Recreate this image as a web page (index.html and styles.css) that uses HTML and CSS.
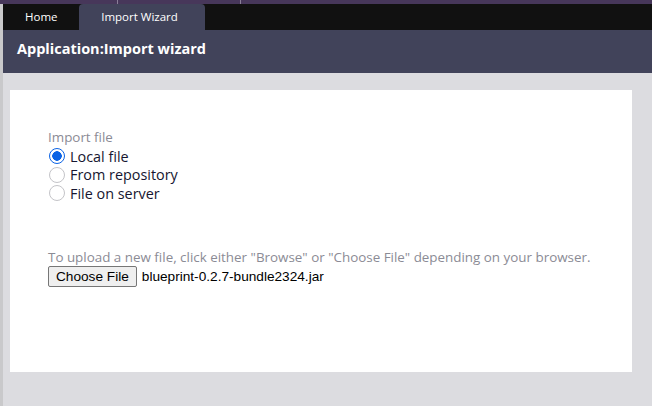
FILE: index.html
```html
<!DOCTYPE html>
<html lang="en">
<head>
    <meta charset="UTF-8">
    <title>Import Wizard</title>
    <link rel="stylesheet" href="styles.css">
</head>
<body>
    <div class="top-strip">
        <span class="sep sep-1"></span>
        <span class="sep sep-2"></span>
    </div>
    <div class="page">
        <div class="tab-bar">
            <a href="#" class="tab">Home</a>
            <a href="#" class="tab active">Import Wizard</a>
        </div>
        <div class="header">
            <h1>Application:Import wizard</h1>
        </div>
        <div class="content">
            <div class="panel">
                <div class="field-label">Import file</div>
                <div class="radio-group">
                    <label class="radio"><input type="radio" name="source" checked> Local file</label>
                    <label class="radio"><input type="radio" name="source"> From repository</label>
                    <label class="radio"><input type="radio" name="source"> File on server</label>
                </div>
                <div class="hint">To upload a new file, click either "Browse" or "Choose File" depending on your browser.</div>
                <div class="file-row">
                    <button class="file-button">Choose File</button>
                    <span class="file-name">blueprint-0.2.7-bundle2324.jar</span>
                </div>
            </div>
        </div>
    </div>
</body>
</html>
```

FILE: styles.css
```css
html, body {
    margin: 0;
    height: 100%;
}

body {
    font-family: "Open Sans", sans-serif;
    background-color: #dcdce0;
    overflow: hidden;
}

.top-strip {
    position: relative;
    height: 4px;
    background-color: #47375a;
}

.sep {
    position: absolute;
    top: 0;
    width: 1px;
    height: 4px;
    background-color: #8a7e98;
}

.sep-1 {
    left: 117px;
}

.sep-2 {
    left: 240px;
}

.page {
    border-left: 3px solid #c9c9cb;
    height: 100%;
}

.tab-bar {
    display: flex;
    height: 26px;
    background-color: #111111;
    padding-left: 4px;
}

.tab {
    color: white;
    text-decoration: none;
    font-size: 11.5px;
    line-height: 26px;
    padding: 0 18px;
}

.active {
    background-color: #41435a;
    border-radius: 4px 4px 0 0;
    width: 126px;
    box-sizing: border-box;
    text-align: center;
    margin-left: 3px;
    padding: 0 4px 0 0;
}

.header {
    background-color: #41435a;
    height: 43px;
    padding: 0 14px;
}

.header h1 {
    margin: 0;
    color: white;
    font-size: 14.5px;
    font-weight: bold;
    line-height: 37px;
}

.content {
    padding: 17px 20px 0 7px;
}

.panel {
    background-color: white;
    height: 282px;
    padding: 39px 38px 0;
    box-sizing: border-box;
}

.field-label {
    color: #8b8b95;
    font-size: 13.4px;
    line-height: 16px;
}

.radio-group {
    display: flex;
    flex-direction: column;
    margin-top: 2px;
}

.radio {
    display: flex;
    align-items: center;
    font-size: 14.4px;
    color: #161630;
    height: 18.5px;
}

.radio input {
    appearance: none;
    margin: 0 5px 0 1px;
    width: 16px;
    height: 16px;
    border: 1px solid #c4c4c8;
    border-radius: 50%;
    box-sizing: border-box;
    background-color: white;
}

.radio input:checked {
    border: 1.5px solid #0b63e5;
    background: radial-gradient(circle, #0b63e5 0, #0b63e5 4.5px, white 5px);
}

.hint {
    margin-top: 45.5px;
    color: #8b8b95;
    font-size: 13.4px;
    line-height: 18px;
}

.file-row {
    display: flex;
    align-items: center;
    font-family: "Liberation Sans", Arial, sans-serif;
    font-size: 13.65px;
}

.file-button {
    font-family: "Liberation Sans", Arial, sans-serif;
    font-size: 13.65px;
    padding: 1px 7px;
    height: 21px;
    border: 1px solid #767676;
    border-radius: 2px;
    background-color: #efefef;
    color: black;
    margin-right: 5px;
}

.file-name {
    color: black;
}
```
